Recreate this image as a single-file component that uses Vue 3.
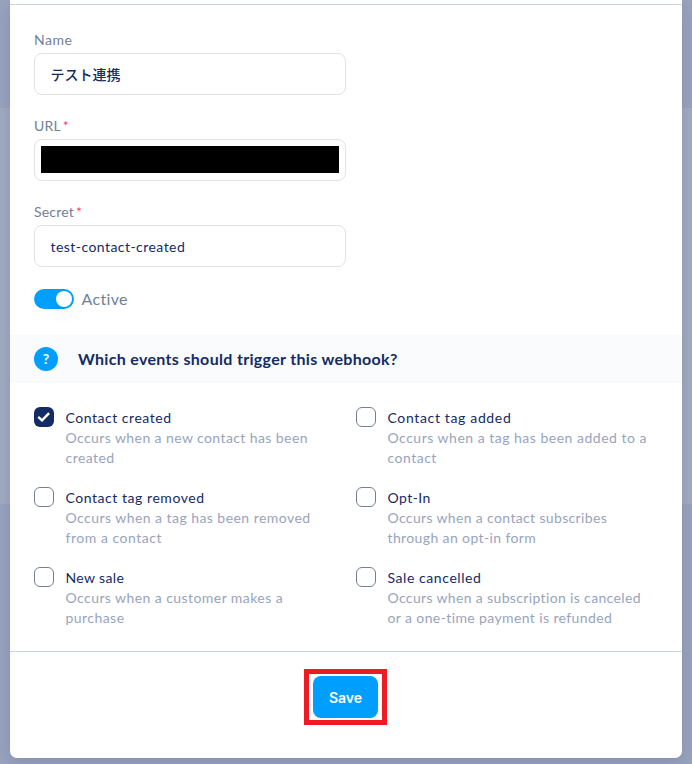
<script setup>
import { ref } from 'vue'

const name = ref('テスト連携')
const secret = ref('test-contact-created')

// Each text row carries its own tracking in px.
const events = ref([
  { title: 'Contact created', track: 0.53, on: true, lines: [['Occurs when a new contact has been', 0.41], ['created', 0.45]] },
  { title: 'Contact tag added', track: 0.65, on: false, lines: [['Occurs when a tag has been added to a', 0.5], ['contact', 0.5]] },
  { title: 'Contact tag removed', track: 0.55, on: false, lines: [['Occurs when a tag has been removed', 0.45], ['from a contact', 0.53]] },
  { title: 'Opt-In', track: 0.45, on: false, lines: [['Occurs when a contact subscribes', 0.35], ['through an opt-in form', 0.38]] },
  { title: 'New sale', track: 0.36, on: false, lines: [['Occurs when a customer makes a', 0.43], ['purchase', 0.45]] },
  { title: 'Sale cancelled', track: 0.57, on: false, lines: [['Occurs when a subscription is canceled', 0.35], ['or a one-time payment is refunded', 0.39]] },
])
</script>

<template>
  <div class="page">
    <div class="modal">
      <div class="fields">
        <div class="field">
          <div class="label name">Name</div>
          <div class="input jp">{{ name }}</div>
        </div>
        <div class="field">
          <div class="label">URL<span class="req">*</span></div>
          <div class="input masked"><div class="mask"></div></div>
        </div>
        <div class="field">
          <div class="label">Secret<span class="req">*</span></div>
          <div class="input">{{ secret }}</div>
        </div>
        <div class="active">
          <div class="switch"><div class="knob"></div></div>
          <span>Active</span>
        </div>
      </div>
      <div class="question">
        <div class="help">?</div>
        <span class="heading">Which events should trigger this webhook?</span>
      </div>
      <div class="events">
        <div v-for="e in events" :key="e.title" class="event" @click="e.on = !e.on">
          <div class="box" :class="{ on: e.on }">
            <svg v-if="e.on" width="20" height="20" viewBox="0 0 20 20">
              <path d="M4.2 9.9 8 13.3 15.1 6.1" fill="none" stroke="#fff" stroke-width="2.4" />
            </svg>
          </div>
          <div>
            <div class="title" :style="{ letterSpacing: e.track + 'px' }">{{ e.title }}</div>
            <div v-for="[text, track] in e.lines" :key="text" class="desc" :style="{ letterSpacing: track + 'px' }">{{ text }}</div>
          </div>
        </div>
      </div>
      <div class="footer">
        <div class="highlight"><button class="save">Save</button></div>
      </div>
    </div>
  </div>
</template>

<style>
body { background: #96a1bc; }
</style>

<style scoped>
.page {
  box-sizing: border-box;
  width: 692px;
  height: 764px;
  padding: 0 10px 6px;
  overflow: hidden;
  background: linear-gradient(#98a3be 108px, #a0abc1 108px, #a0abc1 504px, #98a3be 504px);
  font-family: Lato, "Noto Sans CJK JP", sans-serif;
  font-size: 14px;
  color: #142b63;
}
.modal {
  height: 758px;
  background: #fff;
  border-radius: 0 0 7px 7px;
  box-shadow: 0 5px 16px rgba(40, 50, 90, 0.16);
}
.fields {
  box-sizing: border-box;
  height: 335px;
  padding: 26px 24px 0;
  background: linear-gradient(#fff 4px, #cad5e0 4px, #cad5e0 5px, #fff 5px);
}
.field { width: 312px; height: 86px; }
.label {
  height: 27px;
  line-height: 27px;
  color: #718096;
  letter-spacing: 0.2px;
}
.name { letter-spacing: 0.5px; }
.req { color: #fa3e69; margin-left: 2px; }
.input {
  box-sizing: border-box;
  height: 42px;
  padding-left: 15.5px;
  line-height: 42px;
  border: 1px solid #e0e2e4;
  border-radius: 8px;
  letter-spacing: 0.45px;
}
.jp { font-weight: 500; letter-spacing: 0; }
.masked { padding: 6px; }
.mask { height: 27px; background: #000; }
.active {
  display: flex;
  align-items: center;
  gap: 7.5px;
  height: 20px;
  padding-top: 5px;
  font-size: 16px;
  line-height: 18px;
  color: #718096;
  letter-spacing: 0.35px;
}
.switch {
  box-sizing: border-box;
  display: flex;
  justify-content: flex-end;
  width: 40px;
  height: 20px;
  padding: 2px;
  border-radius: 10px;
  background: #009fff;
}
.knob {
  width: 16px;
  height: 16px;
  border-radius: 50%;
  background: #fff;
  box-shadow: 0 12px 12px rgba(0, 0, 0, 0.03);
}
.question {
  display: flex;
  align-items: center;
  gap: 20px;
  height: 48px;
  padding-left: 24px;
  background: #f9fbfd;
  font-size: 16px;
  font-weight: 700;
}
.heading { padding-bottom: 2px; letter-spacing: 0.32px; }
.help {
  width: 24px;
  height: 24px;
  border-radius: 50%;
  background: #009fff;
  color: #fff;
  font-size: 14px;
  line-height: 24px;
  text-align: center;
}
.events {
  box-sizing: border-box;
  display: grid;
  grid-template-columns: 322px 322px;
  grid-auto-rows: 80px;
  height: 268px;
  padding: 24px 24px 0;
}
.event { display: flex; gap: 11.5px; white-space: nowrap; }
.box {
  box-sizing: border-box;
  width: 20px;
  height: 20px;
  border: 1px solid #718096;
  border-radius: 6px;
}
.box.on { border: 0; background: #142b63; }
.box svg { display: block; }
.title, .desc { height: 20px; line-height: 22px; }
.desc { color: #98a4bd; }
.footer {
  display: flex;
  justify-content: center;
  height: 89px;
  padding: 17px 1px 0 0;
  border-top: 1px solid #cad5e0;
}
.highlight {
  box-sizing: border-box;
  width: 83px;
  height: 56px;
  padding: 2px 4px;
  border: 5px solid #ed1c24;
}
.save {
  display: block;
  width: 65px;
  height: 42px;
  padding: 0;
  border: 0;
  border-radius: 8px;
  background: #009fff;
  color: #fff;
  font: 600 14px Inter, sans-serif;
}
</style>
